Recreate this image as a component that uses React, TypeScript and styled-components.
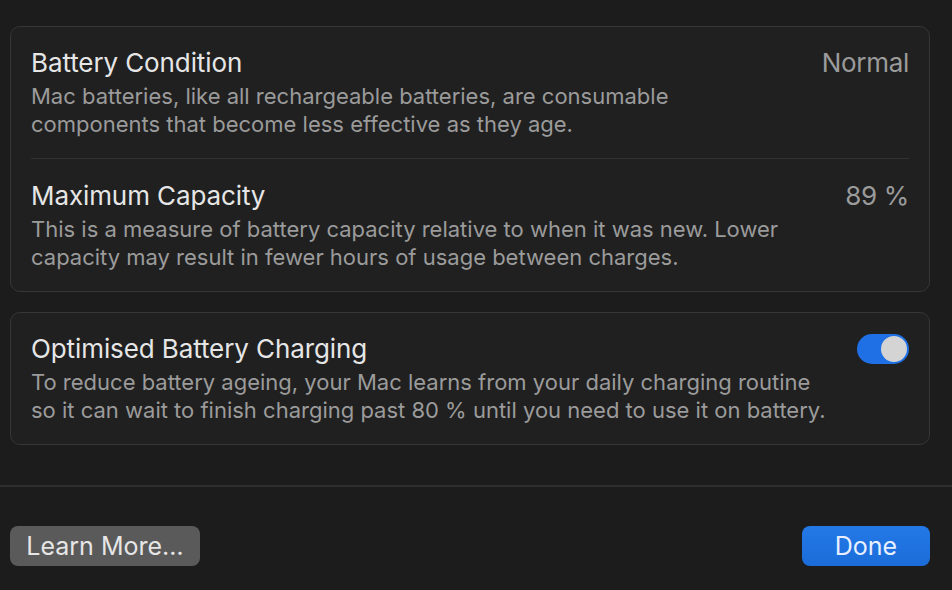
import styled, { createGlobalStyle } from "styled-components";

const GlobalStyle = createGlobalStyle`
  html, body {
    margin: 0;
    padding: 0;
    background: #1c1c1c;
  }
  body {
    font-family: Inter, "Noto Sans", sans-serif;
    -webkit-font-smoothing: antialiased;
  }
`;

const Page = styled.div`
  width: 952px;
  height: 590px;
  display: flex;
  flex-direction: column;
  padding-top: 26px;
  box-sizing: border-box;
`;

const Content = styled.div`
  display: flex;
  flex-direction: column;
  gap: 20px;
  padding: 0 22px 0 10px;
`;

const Card = styled.div`
  background: #202020;
  border: 1px solid #363636;
  border-radius: 10px;
  padding: 0 20px;
`;

const Row = styled.div`
  display: flex;
  align-items: flex-start;
  justify-content: space-between;
  padding: 19px 0 20px;
  & + & {
    border-top: 1px solid #323232;
    padding-top: 20px;
  }
`;

const TextCol = styled.div`
  display: flex;
  flex-direction: column;
`;

const Title = styled.div`
  font-size: 26px;
  line-height: 34px;
  margin-bottom: 2px;
  color: #e6e6e6;
  letter-spacing: -0.1px;
`;

const Desc = styled.div`
  font-size: 22px;
  line-height: 28px;
  color: #9b9b9b;
  white-space: pre-line;
`;

const Value = styled.div`
  font-size: 26px;
  line-height: 34px;
  color: #9b9b9b;
  letter-spacing: -0.3px;
`;

const Toggle = styled.div<{ on: boolean }>`
  width: 52px;
  height: 30px;
  border-radius: 15px;
  margin-top: 2px;
  background: ${(p) => (p.on ? "#1f6fe5" : "#444")};
  display: flex;
  align-items: center;
  justify-content: ${(p) => (p.on ? "flex-end" : "flex-start")};
  padding: 0 2px;
  box-sizing: border-box;
`;

const Knob = styled.div`
  width: 26px;
  height: 26px;
  border-radius: 50%;
  background: #d4d4d4;
`;

const Footer = styled.div`
  margin-top: 40px;
  border-top: 2px solid #2e2e2e;
  display: flex;
  justify-content: space-between;
  padding: 39px 22px 0 10px;
`;

const Button = styled.button<{ primary?: boolean }>`
  height: 40px;
  border: none;
  border-radius: 8px;
  font-family: inherit;
  font-size: 25px;
  color: ${(p) => (p.primary ? "#e8f0ff" : "#e6e6e6")};
  background: ${(p) => (p.primary ? "linear-gradient(#2379e6, #1b6cd9)" : "#5a5a5a")};
  width: ${(p) => (p.primary ? "128px" : "190px")};
  padding: 0;
  display: flex;
  align-items: center;
  justify-content: center;
`;

const rows = [
  {
    title: "Battery Condition",
    desc: "Mac batteries, like all rechargeable batteries, are consumable\ncomponents that become less effective as they age.",
    value: "Normal",
  },
  {
    title: "Maximum Capacity",
    desc: "This is a measure of battery capacity relative to when it was new. Lower\ncapacity may result in fewer hours of usage between charges.",
    value: "89 %",
  },
];

export default function App() {
  return (
    <Page>
      <GlobalStyle />
      <Content>
        <Card>
          {rows.map((r) => (
            <Row key={r.title}>
              <TextCol>
                <Title>{r.title}</Title>
                <Desc>{r.desc}</Desc>
              </TextCol>
              <Value>{r.value}</Value>
            </Row>
          ))}
        </Card>
        <Card>
          <Row>
            <TextCol>
              <Title>Optimised Battery Charging</Title>
              <Desc>
                {"To reduce battery ageing, your Mac learns from your daily charging routine\nso it can wait to finish charging past 80 % until you need to use it on battery."}
              </Desc>
            </TextCol>
            <Toggle on>
              <Knob />
            </Toggle>
          </Row>
        </Card>
      </Content>
      <Footer>
        <Button>Learn More…</Button>
        <Button primary>Done</Button>
      </Footer>
    </Page>
  );
}
